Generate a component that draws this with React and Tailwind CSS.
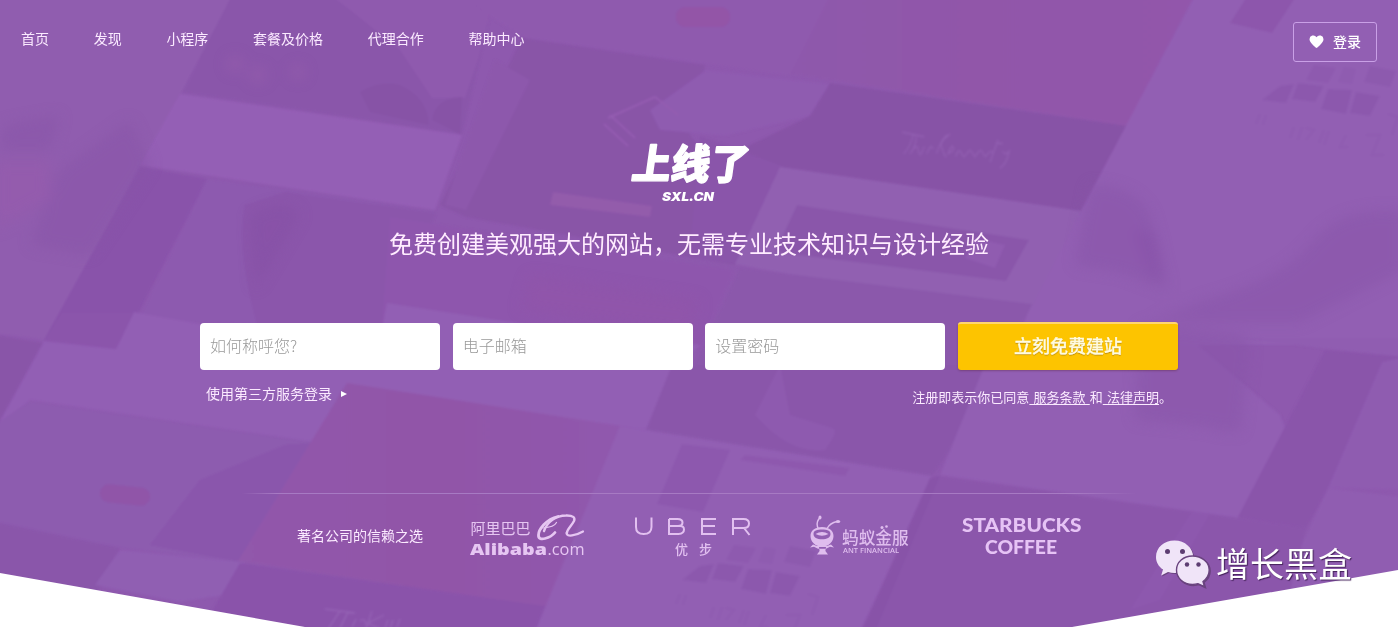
import React from "react";

const CJK = "font-['Noto_Sans_CJK_SC',sans-serif]";

function Tiles({ x, y }) {
  return (
    <g transform={`translate(${x} ${y})`} fill="#8550a5" opacity="0.4">
      <path d="M0 38 L18 24 L32 22 L24 41Z" />
      <path d="M36 21 L62 24 L53 40 L30 37Z" />
      <path d="M66 27 L90 28 L84 52 L59 47Z" />
      <path d="M94 30 L118 34 L108 54 L88 51Z" />
      <path d="M52 3 L74 6 L66 21 L44 18Z" opacity=".7" />
      <path d="M82 5 L94 7 L90 22 L76 20Z" opacity=".5" />
      <path d="M108 4 L134 9 L128 25 L102 20Z" opacity=".8" />
      <g fill="none" stroke="#8550a5" strokeWidth="2.5" opacity=".4">
        <path d="M-6 62l4-10m3 11l3-10M28 76l4-11m4 13l4-13M44 66l8 2-8 10M62 68l-5 13m10-12l-5 14M84 73l-6 12h8M104 73h14l-8 20h12M126 52l10 3-6 18" />
      </g>
    </g>
  );
}

function Backdrop() {
  return (
    <svg className="absolute inset-0 h-full w-full" viewBox="0 0 1398 627" aria-hidden="true">
      <defs>
        <filter id="soft" x="-10%" y="-10%" width="120%" height="120%">
          <feGaussianBlur stdDeviation="1.3" />
        </filter>
        <filter id="smoke" x="-30%" y="-30%" width="160%" height="160%">
          <feGaussianBlur stdDeviation="7" />
        </filter>
        <linearGradient id="pinkTop" x1="0" x2="1">
          <stop offset="0" stopColor="#8e59ac" />
          <stop offset=".45" stopColor="#9157a9" />
          <stop offset="1" stopColor="#9256ab" />
        </linearGradient>
        <linearGradient id="pinkLow" x1="0" x2="1">
          <stop offset="0" stopColor="#9158ab" />
          <stop offset=".5" stopColor="#9155a8" />
          <stop offset="1" stopColor="#9059ae" />
        </linearGradient>
      </defs>
      <rect width="1398" height="627" fill="#8e59ae" />
      <g filter="url(#soft)">
        <path d="M-5 -5H234L182 92L140 165L60 318L45 340L-5 333Z" fill="#905daf" />
        <path d="M232 -5H495L462 134L182 92Z" fill="#8a56aa" />
        <path d="M330 -5H495L478 60L465 98L432 98L400 50L350 10Z" fill="#8f5aae" />
        <path d="M360 92Q380 80 400 85Q428 98 429 125L370 112ZM432 120Q435 98 462 97L460 134Z" fill="#8752a6" />
        <path d="M180 94L462 135L435 210L140 165Z" fill="#945fb5" />
        <path d="M140 167L207 179L138 314L115 350L44 340Z" fill="#8953aa" />
        <path d="M207 179L436 212L392 330L138 320Z" fill="#8d5aaf" />
        <path d="M285 192L436 213L385 345L260 335Q235 250 245 205Z" fill="#8b57ab" />
        <path d="M462 -5H835L825 40L790 76L525 38L495 20Z" fill="#8f5aae" />
        <path d="M522 38L705 65L690 135L735 195L735 265L466 217L440 205Z" fill="#8954a7" />
        <path d="M495 60L530 80L466 210L445 205Z" fill="#8d59ac" />
        <path d="M706 70L830 84L810 116L725 136L660 130L650 110Z" fill="#8f5bb0" />
        <path d="M830 -5H1195L1127 126L790 74Z" fill="url(#pinkTop)" />
        <path d="M830 83L1127 126L1081 211L780 167L740 150L810 116Z" fill="#8753a6" />
        <path d="M700 136L782 166L738 264L690 258Z" fill="#8a55aa" />
        <path d="M390 217L735 270L700 350H380Z" fill="#8e57ad" />
        <path d="M780 167L1081 211L1030 320L735 264Z" fill="#9160b1" />
        <path d="M797 205L1029 240L1006 281L775 252Z" fill="#8a57aa" />
        <path d="M740 268L1032 304L1000 375H690Z" fill="#8b58ab" />
        <path d="M1195 -5H1403V345H1012L1081 211Z" fill="#925fb3" />
        <path d="M1248 -5H1297L1272 33L1230 23Z" fill="#8d57ac" />
        <path d="M-5 335L43 343L-5 430Z" fill="#8954a8" />
        <path d="M62 313L133 313L116 349L45 341Z" fill="#8b55ab" />
        <path d="M134 312L262 335L380 340L387 303L530 325L700 345L672 372L646 430L345 386L312 442L30 400L-5 430L44 341L116 349Z" fill="#925eb4" />
        <path d="M30 401L312 442L240 562L120 548L-5 522V425Z" fill="#8d5baf" />
        <path d="M200 480L285 445L310 443L240 562L150 545Z" fill="#8a57ac" />
        <path d="M-5 522L120 548L98 592L-5 575Z" fill="#8a56aa" />
        <path d="M120 550L245 562L225 595L180 602L95 585Z" fill="#905eb2" />
        <path d="M347 383L640 429L545 607L238 561Z" fill="url(#pinkLow)" />
        <path d="M240 563L545 606L535 632H200Z" fill="#8a53aa" />
        <path d="M672 365H1000L970 420L932 476L646 430Z" fill="#8a57aa" />
        <path d="M780 365L755 415Q790 455 825 450Q840 430 832 428L790 415Z" fill="#8e5aaf" />
        <path d="M620 426L646 430L932 476L860 632H535Z" fill="#925fb3" />
        <path d="M682 444L730 450L703 512L657 504Z" fill="#8d58ae" />
        <path d="M745 455L850 468L845 476L740 460Z" fill="#8e59ae" />
        <path d="M1000 328L1160 313L1280 415L1290 440L1238 518L940 475Z" fill="#925fb3" />
        <path d="M1240 338H1403V357L1328 349Z" fill="#905db1" />
        <path d="M1325 350L1403 357L1306 528L1238 517Z" fill="#8a55aa" />
        <path d="M1382 362L1403 357V490L1328 488Z" fill="#8f5bb0" />
        <path d="M1328 488L1403 497V590L1280 590Z" fill="#905db1" />
        <path d="M935 476L1238 518L1306 528L1280 632H860Z" fill="#8b56ab" />
        <path d="M1192 511L1210 514L1160 600L1130 610Z" fill="#8d58ae" />
        <path d="M930 478L940 476L875 632H862Z" fill="#8853a8" />
        <rect x="676" y="7" width="54" height="20" rx="9" fill="#9355a7" />
        <rect x="100" y="486" width="50" height="18" rx="9" transform="rotate(6 125 495)" fill="#9055a8" />
        <path d="M553 192L652 206L650 217L550 205Z" fill="#935cab" />
        <path d="M608 118L655 97L678 115M610 115L635 138M604 124L628 146" fill="none" stroke="#945db1" strokeWidth="2" />
        <path d="M975 238L1005 245L995 268L965 258Z" fill="#905bb0" />
        <Tiles x="1262" y="62" />
        <Tiles x="682" y="542" />
        <g fill="none" stroke="#9866b7" strokeWidth="1.8" opacity=".65">
          <path transform="translate(902 132) scale(.8 .95)" d="M0 0l28 5m-14 -2q-3 12 -12 20m16-18q-1 10-8 18q9-12 10-5t4 5l4-8m3 8q5-12 8-5m4 5q8-20 16-20q-12 8-10 12q2 6 6 12m3-5q8-2 6-6t-7 8m10 2q4-10 7-4t6 2q5-8 8-2t5 2q5-8 8-2t5 2q6-6 7-2m7-14l-10 24m8-20h8m0 8q2 6 8 0q-3 14-12 18" />
          <path d="M325 609l30 4m-15-2l-12 18m20-17l-8 16m16-9l-4 8m8-6q5-4 6 4m6-14l-6 18m18-14l-16 8l12 6m8-9l-3 8m8-8l-3 8m10-9l-3 8" />
        </g>
      </g>
      <g filter="url(#smoke)" opacity=".5">
        <path d="M60 170L130 120L150 165L90 255L30 245Z" fill="#8854a7" />
        <path d="M5 125L60 115L50 150L0 150Z" fill="#8854a7" />
        <path d="M-5 160H50V200L-5 230Z" fill="#985bac" />
        <circle cx="235" cy="64" r="8" fill="#9b62ad" />
        <circle cx="258" cy="75" r="8" fill="#9b62ad" />
        <circle cx="298" cy="72" r="7" fill="#9b62ad" />
        <path d="M250 215Q290 195 300 215L255 290Z" fill="#8550a4" />
        <path d="M530 275L700 300L690 335L520 310Z" fill="#9254a8" />
        <path d="M1090 185Q1135 185 1150 215L1168 290L1120 272L1075 265Z" fill="#8854a8" />
        <path d="M1132 230L1155 232L1165 280L1150 275Z" fill="#824ba3" />
        <path d="M1403 212Q1340 205 1310 245Q1280 280 1205 300L1150 322H1300L1403 270Z" fill="#8854a8" />
        <path d="M1140 325L1246 335L1240 430L1135 420Z" fill="#8854a8" />
        <path d="M1180 345L1250 345L1240 432L1215 430Z" fill="#8854a8" />
      </g>
      <path d="M0 573L305 627H0ZM1398 570V627H1072Z" fill="#fff" />
    </svg>
  );
}

const navItems = ["首页", "发现", "小程序", "套餐及价格", "代理合作", "帮助中心"];
const fields = ["如何称呼您?", "电子邮箱", "设置密码"];

function Brand() {
  return (
    <svg className="block h-[70px] w-[150px] overflow-visible" viewBox="614 137 150 70" role="img" aria-label="上线了 SXL.CN">
      <g fill="#fff" stroke="#fff" strokeLinejoin="bevel" fontFamily="'Noto Sans CJK SC', sans-serif" fontWeight="900" fontSize="41" strokeWidth="1.4">
        <text transform="translate(630.500 178.500) skewX(-8)" textLength="117" lengthAdjust="spacingAndGlyphs">上线了</text>
      </g>
      <text x="662" y="201" fill="#fff" fontFamily="Inter, sans-serif" fontStyle="italic" fontWeight="900" fontSize="12.2" textLength="52" lengthAdjust="spacingAndGlyphs">SXL.CN</text>
    </svg>
  );
}

function Alibaba() {
  return (
    <svg className="h-[48px] w-[120px]" viewBox="467 511 120 48" fill="#e6c6f2">
      <text x="469.500" y="533.500" fontFamily="'Noto Sans CJK SC', sans-serif" fontSize="15" textLength="60">阿里巴巴</text>
      <text x="469" y="554.500" fontFamily="'Open Sans', sans-serif" fontWeight="800" fontSize="16.500" textLength="77" lengthAdjust="spacingAndGlyphs">Alibaba</text>
      <text x="546.500" y="554.500" fontFamily="'Open Sans', sans-serif" fontSize="16.500" textLength="37" lengthAdjust="spacingAndGlyphs">.com</text>
      <g fill="none" stroke="#e6c6f2" strokeLinecap="round" strokeLinejoin="round">
        <path d="M543 531C546 522 555 515.500 565 515.500C572 515.300 574.500 517.500 573 521C570.500 526 565.500 529.500 566 533" strokeWidth="2.400" />
        <path d="M557 516.500C545 519 537.500 530 537.500 535C537.200 538.500 540 539.500 544 538.500C548 537.500 552 535 554 532.500" strokeWidth="2.800" />
        <path d="M542 528C548 527.500 554 525.500 555.500 522.500" strokeWidth="1.200" />
        <path d="M565.500 533C565.500 537.500 575 535.500 582 531.500" strokeWidth="2.200" />
      </g>
    </svg>
  );
}

function Ant() {
  return (
    <svg className="h-[48px] w-[102px]" viewBox="807 512 102 48" fill="#dfbdee">
      <path d="M817.500 530Q814.500 525 818 519.500M826 529.500Q829 524 836 522.500" fill="none" stroke="#dfbdee" strokeWidth="1.400" />
      <ellipse cx="819" cy="518.500" rx="1.500" ry="2.100" />
      <ellipse cx="837" cy="522.500" rx="2.200" ry="1.500" />
      <path fillRule="evenodd" d="M809.500 537c0-5.500 4.500-9 11.500-9s11.500 3.500 11.500 9-4.500 10.500-11.500 10.500-11.500-5-11.500-10.500Zm3-2c0 3.500 3.500 5.300 8.500 5.300s8.500-1.800 8.500-5.300-3.500-4.500-8.500-4.500-8.500 1-8.500 4.500Z" />
      <path d="M814.500 535Q821 531 827.500 535Q821 538.500 814.500 535M816 547l-4-1.500-3 3 4-.8 4 2h8l4-2 4 .8-3-3-4 1.500ZM818 548h7l-.6 4 2.600 3.500h-11l2.600-3.500Z" />
      <text x="841" y="544.500" fontFamily="'Noto Sans CJK SC', sans-serif" fontWeight="500" fontSize="16.500" textLength="66.500" lengthAdjust="spacingAndGlyphs">蚂蚁金服</text>
      <text x="842" y="553.500" fontFamily="'Open Sans', sans-serif" fontWeight="600" fontSize="7" textLength="56" lengthAdjust="spacingAndGlyphs">ANT FINANCIAL</text>
      <circle cx="881" cy="528.500" r="1.500" />
      <circle cx="885.500" cy="527.500" r="1.300" />
    </svg>
  );
}

function WeChat() {
  return (
    <svg className="h-[52px] w-[56px] shrink-0 drop-shadow-[1px_1px_0.5px_#6a437f]" viewBox="1154 537 56 52">
      <path d="M1174.500 540.500c-10.500 0-18.500 7-18.500 16.500 0 5.200 2.600 9.600 7 12.600l-1.800 6 6.800-3.500c2 .6 4.200.9 6.500.9 10.500 0 18.700-7 18.700-16s-8.200-16.500-18.700-16.500Z" fill="#f0e4f8" />
      <path d="M1192.500 556c-9 0-16 6-16 14s7 14.500 16 14.500c2 0 3.800-.3 5.500-.8l6.500 3-1.500-5.200c3.600-2.700 6.200-6.800 6.200-11.500 0-8-7.700-14-16.700-14Z" fill="#f0e4f8" stroke="#6a437f" strokeWidth="1.400" />
      <g fill="#5d3d72">
        <circle cx="1167.500" cy="551.500" r="2.500" />
        <circle cx="1182.500" cy="551.500" r="2.500" />
        <circle cx="1187" cy="564.500" r="2.200" />
        <circle cx="1198.500" cy="564.500" r="2.200" />
      </g>
    </svg>
  );
}

export default function App() {
  return (
    <div className={`relative h-[627px] w-[1398px] overflow-hidden text-white ${CJK}`}>
      <Backdrop />
      <div className="relative flex h-full flex-col">
        <header className="flex h-[137px] shrink-0 items-start justify-between pt-[22px] pr-[21px] pl-[21px]">
          <nav className="flex gap-[44.7px] pt-[6px] text-[14px] leading-5 text-[#fbeaff]">
            {navItems.map((n) => (
              <a key={n}>{n}</a>
            ))}
          </nav>
          <button className="flex h-10 w-[84px] items-center gap-[9px] rounded-[3px] border border-[#c9a0e6] pb-[2px] pl-[15px] text-[14px] font-medium">
            <svg className="h-[13px] w-[15px]" viewBox="0 0 15 13" fill="#fff">
              <path d="M7.500 13C5.500 11.500 0.500 7.500 0.500 4.200A3.800 3.800 0 0 1 7.500 2.200A3.800 3.800 0 0 1 14.500 4.200C14.500 7.500 9.500 11.500 7.500 13Z" />
            </svg>
            登录
          </button>
        </header>

        <main className="flex w-[1378px] flex-col items-center">
          <Brand />
          <h1 className="mt-[18px] h-9 text-[24px] leading-9 font-normal text-[#ffecff]">免费创建美观强大的网站，无需专业技术知识与设计经验</h1>

          <form className="mt-[61px] flex w-[978px] items-end justify-between">
            {fields.map((f) => (
              <input
                key={f}
                placeholder={f}
                className="h-[47px] w-[240px] rounded-[4px] bg-white px-[10px] pb-[3px] text-[16px] font-light placeholder:text-[#999]"
              />
            ))}
            <button
              type="button"
              className="h-12 w-[220px] rounded-[3px] border-t-2 border-[#ffd56f] bg-[#fdc400] pb-[4px] text-[18px] font-medium text-[#fffbe0] shadow-[0_1px_2px_rgba(90,40,60,0.4)] [-webkit-text-stroke:0.3px_#fffbe0] [text-shadow:0_1px_1px_#b98a10]"
            >
              立刻免费建站
            </button>
          </form>

          <div className="flex w-[978px] items-start justify-between pr-[6px] pl-[6px] text-[#fbeaff]">
            <div className="flex items-center gap-[9px] pt-[13px] text-[14px] leading-5">
              使用第三方服务登录
              <span className="mt-[2px] h-0 w-0 border-y-[3.5px] border-l-[6px] border-y-transparent border-l-white" />
            </div>
            <p className="pt-[17px] text-[13px] leading-5 whitespace-pre [word-spacing:1.3px]">
              注册即表示你已同意<a className="underline underline-offset-2"> 服务条款 </a>和<a className="underline underline-offset-2"> 法律声明</a>。
            </p>
          </div>

          <div className="mt-[86px] h-px w-[896px] [background-image:linear-gradient(to_right,transparent,#a77ac3_4%,#a77ac3_93%,transparent)]" />

          <section className="mt-[17px] flex h-[48px] w-[784px] items-center">
            <p className="w-[128px] shrink-0 text-[14px] whitespace-nowrap text-[#fbeaff]">著名公司的信赖之选</p>
            <div className="ml-[43px] flex shrink-0">
              <Alibaba />
            </div>
            <svg className="ml-[46px] h-[48px] w-[118px] shrink-0" viewBox="633 511 118 48" fill="#e2c0f0">
              <g fill="none" stroke="#e2c0f0" strokeWidth="2">
                <path d="M635 517.500V527Q635 534 642.700 534T650.500 527V517.500M668 519V534H677.500Q683 533.500 683 529.500T678 526H668M668 519H676.500Q681.500 519 681.500 522.500T677 526M715 519H701V534H715M701 526H714M732 535V519H742.500Q748 519 748 523.500T742.500 528H732M743 528L748.500 535" />
              </g>
              <text x="674" y="554" fontFamily="'Noto Sans CJK SC', sans-serif" fontWeight="500" fontSize="13">优</text>
              <text x="698" y="554" fontFamily="'Noto Sans CJK SC', sans-serif" fontWeight="500" fontSize="13">步</text>
            </svg>
            <div className="ml-[56px] flex shrink-0">
              <Ant />
            </div>
            <svg className="ml-[52px] h-[48px] w-[122px] shrink-0" viewBox="961 512 122 48" fill="#e6c3f5" fontFamily="Lato, sans-serif" fontWeight="900" fontSize="18">
              <text x="961" y="532.500" textLength="119.500" lengthAdjust="spacingAndGlyphs">STARBUCKS</text>
              <text x="984" y="554.500" textLength="72" lengthAdjust="spacingAndGlyphs">COFFEE</text>
            </svg>
          </section>
        </main>
      </div>

      <div className="absolute top-[537px] left-[1154px] flex items-center gap-[6px]">
        <WeChat />
        <span className="text-[34px] leading-[52px] text-white [text-shadow:1px_1px_1px_#44225a]">增长黑盒</span>
      </div>
    </div>
  );
}
